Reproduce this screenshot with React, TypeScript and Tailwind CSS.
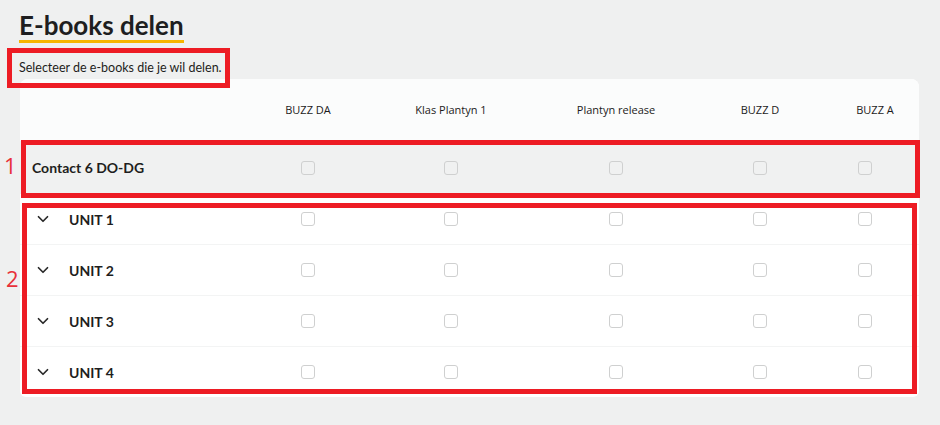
import { ChevronDown } from 'lucide-react'

const cols = 'grid grid-cols-[223px_130px_156px_174px_114px_96px] items-center'

const books = ['BUZZ DA', 'Klas Plantyn 1', 'Plantyn release', 'BUZZ D', 'BUZZ A']
const units = ['UNIT 1', 'UNIT 2', 'UNIT 3', 'UNIT 4']

function Box() {
  return <span className="block w-[14px] h-[14px] rounded-[3px] border border-[#cfd0d0]" />
}

function Boxes() {
  return (
    <>
      {books.map((b) => (
        <div key={b} className="flex justify-center">
          <Box />
        </div>
      ))}
    </>
  )
}

export default function App() {
  return (
    <div className="relative w-[940px] h-[425px] overflow-hidden bg-[#eff0f0] font-['Lato',sans-serif] text-[#1e1e20]">
      <div className="pl-[19px] pt-[10px]">
        <h1 className="inline-block text-[26px] leading-[30px] font-bold border-b-[3px] border-[#f7b500]">
          E-books delen
        </h1>
        <p className="mt-[17px] text-[12.5px] leading-[16px]">Selecteer de e-books die je wil delen.</p>

        {/* tabel */}
        <div className="mt-[3px] ml-px w-[899px] h-[318px] overflow-hidden rounded-t-[8px] rounded-b-[6px] bg-white">
          <div className={`${cols} h-[62px] bg-[#fbfcfc] font-['Open_Sans',sans-serif] text-[11px] text-[#1b1b1b]`}>
            <div />
            {books.map((b, i) => (
              <div key={b} className={i === 4 ? 'text-center pl-[20px]' : 'text-center'}>
                {b}
              </div>
            ))}
          </div>

          <div className={`${cols} h-[53px] bg-[#f0f1f1]`}>
            <div className="pl-[12px] text-[14px] font-bold">Contact 6 DO-DG</div>
            <Boxes />
          </div>

          {units.map((u) => (
            <div key={u} className={`${cols} h-[51px] border-b border-[#f3f4f4]`}>
              <div className="flex items-center pl-[14px] gap-[17px]">
                <ChevronDown size={18} strokeWidth={2.3} className="text-[#2a2a2a]" />
                <span className="text-[14px] font-bold">{u}</span>
              </div>
              <Boxes />
            </div>
          ))}
        </div>
      </div>

      {/* annotaties */}
      <div className="absolute left-[7px] top-[48px] w-[223px] h-[40px] border-[5px] border-[#ed1c24]" />
      <div className="absolute left-[21px] top-[140px] w-[899px] h-[58px] border-[5px] border-[#ed1c24]" />
      <div className="absolute left-[22px] top-[203px] w-[895px] h-[191px] border-[5px] border-[#ed1c24]" />
      <span className="absolute left-[4px] top-[154px] text-[22px] leading-none font-['Open_Sans',sans-serif] text-[#e8313a]">1</span>
      <span className="absolute left-[6px] top-[267px] text-[22px] leading-none font-['Open_Sans',sans-serif] text-[#e8313a]">2</span>
    </div>
  )
}
